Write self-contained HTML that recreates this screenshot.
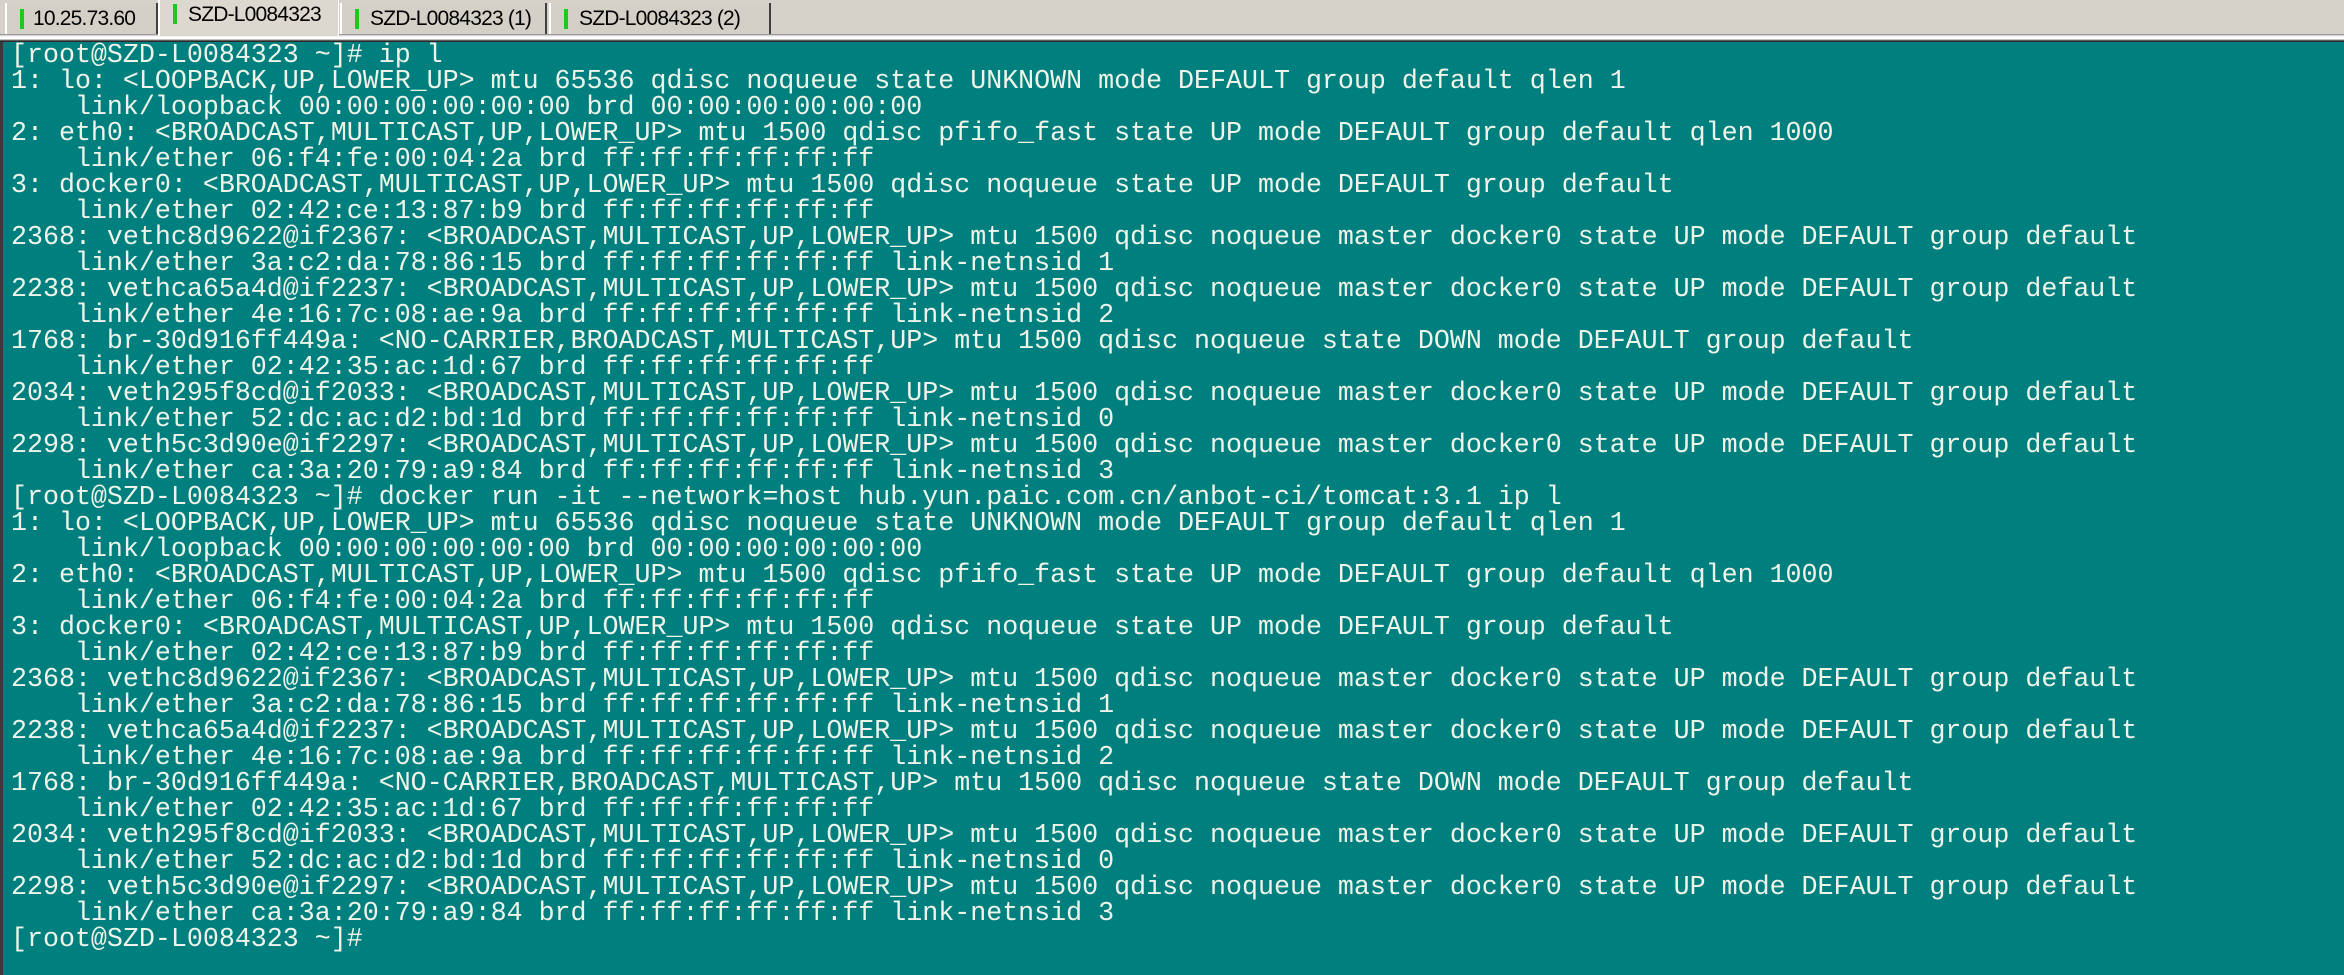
<!DOCTYPE html>
<html><head><style>
html,body{margin:0;padding:0;width:2344px;height:975px;overflow:hidden;background:#d4d0c8;}
.tabs{position:absolute;left:0;top:0;width:2344px;height:34px;background:#d6d2ca;}
.tab{position:absolute;top:3px;height:31px;background:#d4d0c8;border-left:2px solid #fff;border-right:2px solid #404040;box-sizing:border-box;font-family:"Liberation Sans",sans-serif;font-size:21px;color:#000;line-height:32px;padding-left:28px;letter-spacing:-0.8px;white-space:nowrap;overflow:hidden}
.tab::before{content:"";position:absolute;left:13px;top:6px;width:4px;height:20px;background:#1ec81e}
.tab.act{top:0;height:36px;background:#dcd8d0;border-right:1px solid #fff;z-index:2;line-height:30px}
.tab.act::before{top:4px}
.sep{position:absolute;left:0;top:34px;width:2344px;height:8px;background:linear-gradient(#9a9a9a 0,#9a9a9a 1px,#c8c8c8 1px,#fff 3px,#fff 5px,#888 6px,#333 7px,#222 8px)}
.term{position:absolute;left:0;top:42px;width:2344px;height:933px;background:#007f7f;border-left:3px solid #3a3a3a;box-sizing:border-box}
pre{margin:0;position:absolute;left:8px;top:1px;font-family:"Liberation Mono",monospace;font-size:26.65px;line-height:26px;color:#eef4e8;letter-spacing:0}
</style></head><body>
<div class="tabs">
<div class="tab" style="left:5px;width:153px;padding-left:26px">10.25.73.60</div>
<div class="tab act" style="left:158px;width:181px">SZD-L0084323</div>
<div class="tab" style="left:340px;width:207px">SZD-L0084323 (1)</div>
<div class="tab" style="left:549px;width:222px">SZD-L0084323 (2)</div>
</div>
<div class="sep"></div>
<div class="term"><pre>[root@SZD-L0084323 ~]# ip l
1: lo: &lt;LOOPBACK,UP,LOWER_UP&gt; mtu 65536 qdisc noqueue state UNKNOWN mode DEFAULT group default qlen 1
    link/loopback 00:00:00:00:00:00 brd 00:00:00:00:00:00
2: eth0: &lt;BROADCAST,MULTICAST,UP,LOWER_UP&gt; mtu 1500 qdisc pfifo_fast state UP mode DEFAULT group default qlen 1000
    link/ether 06:f4:fe:00:04:2a brd ff:ff:ff:ff:ff:ff
3: docker0: &lt;BROADCAST,MULTICAST,UP,LOWER_UP&gt; mtu 1500 qdisc noqueue state UP mode DEFAULT group default
    link/ether 02:42:ce:13:87:b9 brd ff:ff:ff:ff:ff:ff
2368: vethc8d9622@if2367: &lt;BROADCAST,MULTICAST,UP,LOWER_UP&gt; mtu 1500 qdisc noqueue master docker0 state UP mode DEFAULT group default
    link/ether 3a:c2:da:78:86:15 brd ff:ff:ff:ff:ff:ff link-netnsid 1
2238: vethca65a4d@if2237: &lt;BROADCAST,MULTICAST,UP,LOWER_UP&gt; mtu 1500 qdisc noqueue master docker0 state UP mode DEFAULT group default
    link/ether 4e:16:7c:08:ae:9a brd ff:ff:ff:ff:ff:ff link-netnsid 2
1768: br-30d916ff449a: &lt;NO-CARRIER,BROADCAST,MULTICAST,UP&gt; mtu 1500 qdisc noqueue state DOWN mode DEFAULT group default
    link/ether 02:42:35:ac:1d:67 brd ff:ff:ff:ff:ff:ff
2034: veth295f8cd@if2033: &lt;BROADCAST,MULTICAST,UP,LOWER_UP&gt; mtu 1500 qdisc noqueue master docker0 state UP mode DEFAULT group default
    link/ether 52:dc:ac:d2:bd:1d brd ff:ff:ff:ff:ff:ff link-netnsid 0
2298: veth5c3d90e@if2297: &lt;BROADCAST,MULTICAST,UP,LOWER_UP&gt; mtu 1500 qdisc noqueue master docker0 state UP mode DEFAULT group default
    link/ether ca:3a:20:79:a9:84 brd ff:ff:ff:ff:ff:ff link-netnsid 3
[root@SZD-L0084323 ~]# docker run -it --network=host hub.yun.paic.com.cn/anbot-ci/tomcat:3.1 ip l
1: lo: &lt;LOOPBACK,UP,LOWER_UP&gt; mtu 65536 qdisc noqueue state UNKNOWN mode DEFAULT group default qlen 1
    link/loopback 00:00:00:00:00:00 brd 00:00:00:00:00:00
2: eth0: &lt;BROADCAST,MULTICAST,UP,LOWER_UP&gt; mtu 1500 qdisc pfifo_fast state UP mode DEFAULT group default qlen 1000
    link/ether 06:f4:fe:00:04:2a brd ff:ff:ff:ff:ff:ff
3: docker0: &lt;BROADCAST,MULTICAST,UP,LOWER_UP&gt; mtu 1500 qdisc noqueue state UP mode DEFAULT group default
    link/ether 02:42:ce:13:87:b9 brd ff:ff:ff:ff:ff:ff
2368: vethc8d9622@if2367: &lt;BROADCAST,MULTICAST,UP,LOWER_UP&gt; mtu 1500 qdisc noqueue master docker0 state UP mode DEFAULT group default
    link/ether 3a:c2:da:78:86:15 brd ff:ff:ff:ff:ff:ff link-netnsid 1
2238: vethca65a4d@if2237: &lt;BROADCAST,MULTICAST,UP,LOWER_UP&gt; mtu 1500 qdisc noqueue master docker0 state UP mode DEFAULT group default
    link/ether 4e:16:7c:08:ae:9a brd ff:ff:ff:ff:ff:ff link-netnsid 2
1768: br-30d916ff449a: &lt;NO-CARRIER,BROADCAST,MULTICAST,UP&gt; mtu 1500 qdisc noqueue state DOWN mode DEFAULT group default
    link/ether 02:42:35:ac:1d:67 brd ff:ff:ff:ff:ff:ff
2034: veth295f8cd@if2033: &lt;BROADCAST,MULTICAST,UP,LOWER_UP&gt; mtu 1500 qdisc noqueue master docker0 state UP mode DEFAULT group default
    link/ether 52:dc:ac:d2:bd:1d brd ff:ff:ff:ff:ff:ff link-netnsid 0
2298: veth5c3d90e@if2297: &lt;BROADCAST,MULTICAST,UP,LOWER_UP&gt; mtu 1500 qdisc noqueue master docker0 state UP mode DEFAULT group default
    link/ether ca:3a:20:79:a9:84 brd ff:ff:ff:ff:ff:ff link-netnsid 3
[root@SZD-L0084323 ~]#</pre></div>
</body></html>
